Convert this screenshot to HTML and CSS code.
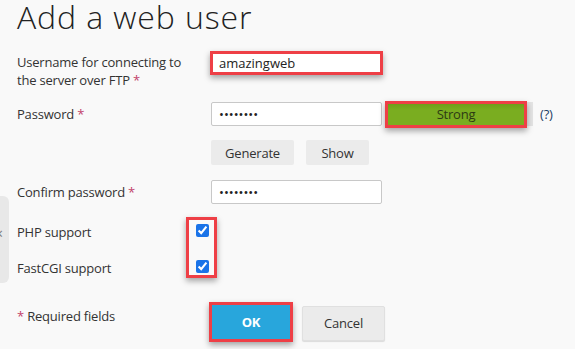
FILE: index.html
```html
<!DOCTYPE html>
<html lang="en">
<head>
    <meta charset="UTF-8">
    <meta name="viewport" content="width=device-width, initial-scale=1.0">
    <title>Add a web user</title>
    <link rel="stylesheet" href="styles.css">
</head>
<body>
    <div class="side-tab"><span>&times;</span></div>

    <div class="page">
        <h1>Add a web user</h1>

        <form class="user-form">
            <div class="row row-username">
                <label for="login" class="field-label">Username for connecting to the server over FTP <span class="req">*</span></label>
                <div class="field">
                    <input type="text" id="login" class="text-input text-input-marked" value="amazingweb">
                </div>
            </div>

            <div class="row row-password">
                <label for="password" class="field-label">Password <span class="req">*</span></label>
                <div class="field">
                    <input type="password" id="password" class="text-input" value="12345678">
                    <div class="meter">
                        <div class="meter-fill">Strong</div>
                    </div>
                    <span class="hint">(?)</span>
                </div>
            </div>

            <div class="row row-actions">
                <span></span>
                <div class="field">
                    <button type="button" class="btn btn-generate">Generate</button>
                    <button type="button" class="btn btn-show">Show</button>
                </div>
            </div>

            <div class="row row-confirm">
                <label for="confirm" class="field-label">Confirm password <span class="req">*</span></label>
                <div class="field">
                    <input type="password" id="confirm" class="text-input" value="12345678">
                </div>
            </div>

            <div class="checks">
                <label for="php" class="field-label check-label">PHP support</label>
                <label for="fastcgi" class="field-label check-label check-label-2">FastCGI support</label>
                <div class="check-box">
                    <input type="checkbox" id="php" checked>
                    <input type="checkbox" id="fastcgi" checked>
                </div>
            </div>

            <div class="row row-submit">
                <span class="field-label required-note"><span class="req">*</span> Required fields</span>
                <div class="field">
                    <button type="button" class="btn btn-ok">OK</button>
                    <button type="button" class="btn btn-cancel">Cancel</button>
                </div>
            </div>
        </form>
    </div>
</body>
</html>
```

FILE: styles.css
```css
* {
    margin: 0;
    padding: 0;
    box-sizing: border-box;
}

body {
    font-family: 'Open Sans', 'DejaVu Sans', sans-serif;
    font-size: 13px;
    letter-spacing: -0.2px;
    color: #333;
    background: #f9f9f9;
    width: 575px;
    height: 349px;
    overflow: hidden;
    position: relative;
}

.page {
    padding-left: 17px;
}

h1 {
    font-size: 32px;
    font-weight: 300;
    letter-spacing: 0.9px;
    line-height: 36px;
    color: #222;
    margin-top: -1px;
    margin-bottom: 1px;
}

.row {
    display: grid;
    grid-template-columns: 194px 1fr;
    align-items: center;
}

.field {
    display: flex;
    align-items: center;
}

.field-label {
    line-height: 17px;
    color: #333;
}

.req {
    color: #c2416a;
}

.row-username {
    margin-top: 16px;
    align-items: start;
}

.row-username .field-label {
    line-height: 18px;
    padding-top: 2px;
    padding-right: 14px;
}

.text-input {
    width: 171px;
    height: 24px;
    border: 1px solid #c8c8c8;
    border-radius: 2px;
    background: #fff;
    padding: 0 7px;
    font-family: inherit;
    font-size: 13px;
    color: #222;
    outline: none;
}

.text-input-marked {
    width: 173px;
    margin-left: -1px;
    border: 3px solid #ee3f46;
    border-radius: 0;
    padding: 0 6px;
    box-shadow: 0 3px 6px rgba(0, 0, 0, 0.35);
}

.row-password {
    margin-top: 13px;
}

.meter {
    width: 148px;
    height: 24px;
    margin-left: 3px;
    background: #e4e4e4;
    display: flex;
    align-items: center;
}

.meter-fill {
    width: 142px;
    height: 27px;
    border: 3px solid #ee3f46;
    background: linear-gradient(#6e9e1a, #7aad20 30%, #7aad20);
    box-shadow: 0 3px 6px rgba(0, 0, 0, 0.35);
    text-align: center;
    line-height: 20px;
    color: #2d3a14;
    font-size: 13px;
}

.hint {
    margin-left: 7px;
    color: #1d3f66;
}

.row-actions {
    margin-top: 14px;
}

.btn {
    font-family: inherit;
    font-size: 13px;
    letter-spacing: -0.2px;
    border: none;
    border-radius: 2px;
    background: #ebebeb;
    color: #333;
    cursor: pointer;
}

.btn-generate {
    width: 83px;
    height: 25px;
}

.btn-show {
    width: 63px;
    height: 25px;
    margin-left: 12px;
}

.row-confirm {
    margin-top: 15px;
}

.checks {
    margin-top: 9px;
    display: grid;
    grid-template-columns: 169px 31px;
    grid-template-rows: 36px 36px;
}

.check-label {
    grid-column: 1;
    grid-row: 1;
    padding-top: 11px;
}

.check-label-2 {
    grid-row: 2;
}

.check-box {
    grid-column: 2;
    grid-row: 1 / span 2;
    align-self: start;
    margin-top: 4px;
    height: 61px;
    border: 3px solid #ee3f46;
    box-shadow: 0 3px 6px rgba(0, 0, 0, 0.35);
    display: flex;
    flex-direction: column;
    gap: 23px;
    padding: 4px 0 0 7px;
}

.check-box input {
    margin: 0;
    width: 13px;
    height: 13px;
    accent-color: #1a73e8;
}

.row-submit {
    margin-top: 17px;
    grid-template-columns: 192px 1fr;
    align-items: start;
}

.required-note {
    padding-top: 6px;
}

.btn-ok {
    width: 84px;
    height: 40px;
    border: 3px solid #ee3f46;
    border-radius: 0;
    background: #28a6dc;
    color: #fff;
    font-weight: 700;
    box-shadow: 0 3px 6px rgba(0, 0, 0, 0.35);
}

.btn-cancel {
    width: 83px;
    height: 35px;
    margin-left: 9px;
    margin-top: 2px;
    border: 1px solid #e0e0e0;
    box-shadow: 0 1px 1px rgba(0, 0, 0, 0.12);
}

.side-tab {
    position: absolute;
    left: 0;
    top: 196px;
    width: 9px;
    height: 87px;
    background: #e8e8e8;
    border-radius: 0 6px 6px 0;
    overflow: hidden;
}

.side-tab span {
    position: absolute;
    left: -5px;
    top: 28px;
    font-size: 14px;
    color: #777;
}
```
